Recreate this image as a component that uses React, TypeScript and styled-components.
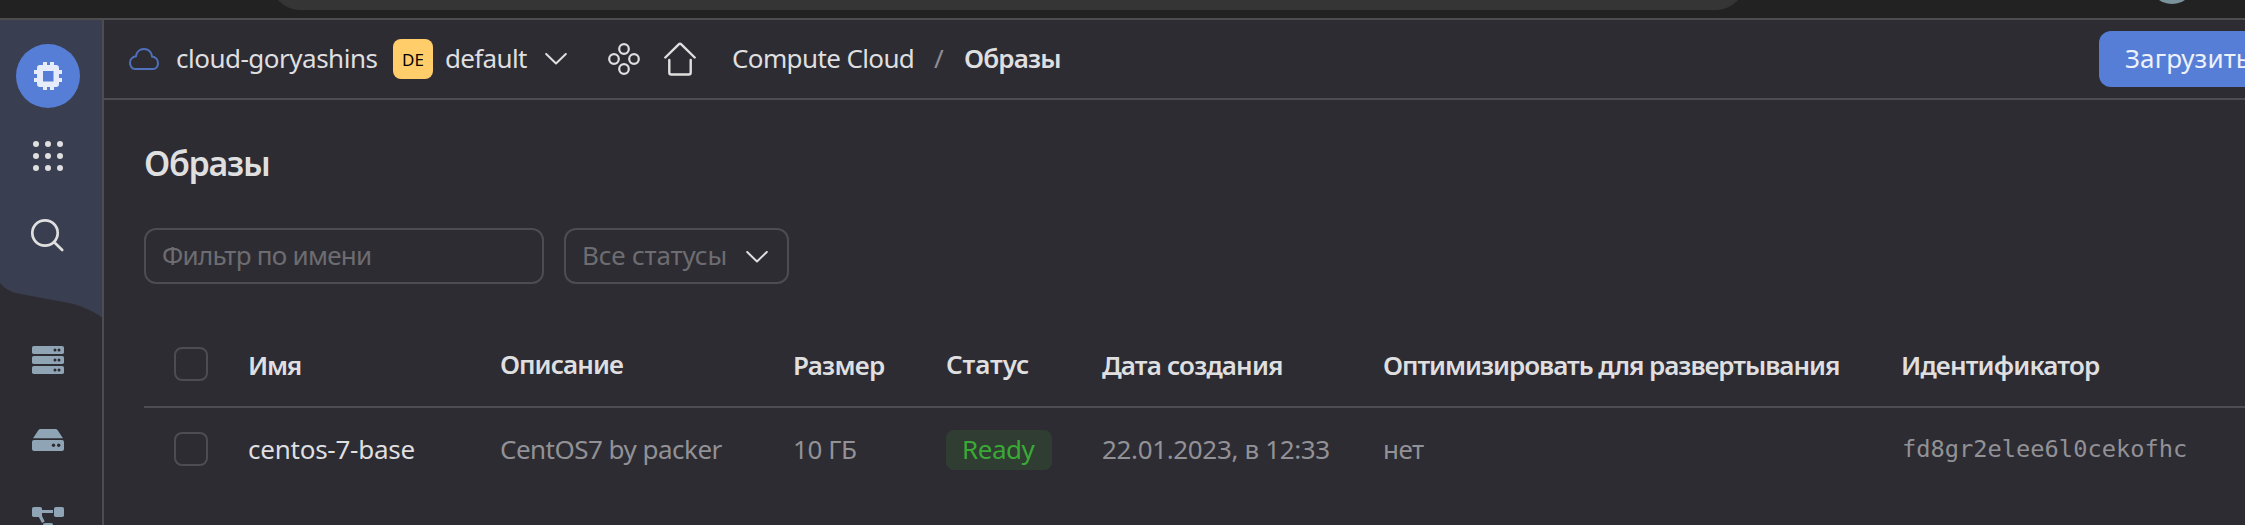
import React from "react";
import styled, { createGlobalStyle } from "styled-components";

const GlobalStyle = createGlobalStyle`
  * { box-sizing: border-box; }
  html, body { margin: 0; background: #2d2c33; overflow: hidden; }
  body { font: 26px/36px "Noto Sans", sans-serif; color: #dfdfe0; }
  svg { display: block; flex: none; }
`;

const Page = styled.div`
  display: flex;
  flex-direction: column;
  width: 2245px;
  height: 525px;
  overflow: hidden;
`;

const BrowserBar = styled.div`
  display: flex;
  justify-content: space-between;
  align-items: flex-end;
  flex: none;
  height: 20px;
  padding: 0 50px 8px 271px;
  background: #222222;
  border-bottom: 2px solid #4d4d4f;
`;

const AddressField = styled.div`
  display: flex;
  align-items: flex-end;
  width: 1474px;
  height: 10px;
  overflow: hidden;

  &::before {
    content: "";
    flex: 1;
    height: 58px;
    border-radius: 29px;
    background: #353535;
  }
`;

const Avatar = styled.div`
  display: flex;
  align-items: flex-end;
  width: 46px;
  height: 4px;
  margin-bottom: 6px;
  overflow: hidden;

  &::before {
    content: "";
    flex: none;
    width: 46px;
    height: 46px;
    border-radius: 50%;
    background: #7b939c;
  }
`;

const Workspace = styled.div`
  display: flex;
  flex: 1;
  min-height: 0;
`;

const Sidebar = styled.nav`
  display: flex;
  flex-direction: column;
  flex: none;
  width: 104px;
  overflow: hidden;
  border-right: 2px solid #4d4c52;
`;

const SidebarTop = styled.div`
  display: flex;
  flex-direction: column;
  align-items: center;
  flex: none;
  height: 300px;
  padding: 24px 6px 0 0;
  background: #3a3e51;
  clip-path: path("M0 0H102V297.5C92 290 80 285.500 69 283L18 273.500C10 272 4 268 0 263Z");
`;

const ServiceButton = styled.div`
  display: grid;
  place-items: center;
  width: 64px;
  height: 64px;
  border-radius: 50%;
  background: #567ed6;
`;

const SidebarItem = styled.div<{ $h?: number }>`
  display: grid;
  place-items: center;
  flex: none;
  width: 80px;
  height: ${({ $h = 80 }) => $h}px;
`;

const SidebarList = styled.div`
  display: flex;
  flex-direction: column;
  align-items: center;
  padding-right: 6px;
`;

const Main = styled.main`
  display: flex;
  flex-direction: column;
  flex: 1;
  min-width: 0;
`;

const Header = styled.header`
  display: flex;
  align-items: center;
  flex: none;
  height: 80px;
  padding-left: 25px;
  overflow: hidden;
  white-space: nowrap;
  border-bottom: 2px solid #4d4c52;
`;

const HeaderText = styled.span<{ $w: number; $ls: number; $bold?: boolean; $dim?: boolean }>`
  flex: none;
  width: ${({ $w }) => $w}px;
  margin-top: -2px;
  letter-spacing: ${({ $ls }) => $ls}px;
  font-weight: ${({ $bold }) => ($bold ? 600 : 400)};
  color: ${({ $dim }) => ($dim ? "#8f8e93" : "inherit")};
`;

const CloudSlot = styled.div`
  width: 47px;
`;

const FolderBadge = styled.span`
  flex: none;
  width: 40px;
  height: 40px;
  margin-right: 12px;
  border-radius: 8px;
  background: #ffce6b;
  color: #000;
  font-size: 17px;
  line-height: 42px;
  text-align: center;
`;

const HeaderIcon = styled.div<{ $w: number }>`
  flex: none;
  width: ${({ $w }) => $w}px;
`;

const UploadButton = styled.button`
  flex: none;
  width: 146px;
  height: 56px;
  margin-left: auto;
  padding: 0 0 2px 26px;
  overflow: hidden;
  border: 0;
  border-radius: 12px 0 0 12px;
  background: #567ed6;
  color: #edf1fb;
  font: inherit;
  letter-spacing: 0.1px;
  text-align: left;
  white-space: nowrap;
`;

const Content = styled.section`
  padding: 40px 0 0 40px;
`;

const Title = styled.h1`
  margin: 0;
  font-size: 34px;
  line-height: 47px;
  padding-bottom: 1px;
  font-weight: 600;
  letter-spacing: -1.25px;
`;

const Filters = styled.div`
  display: flex;
  gap: 20px;
  margin-top: 40px;
`;

const Field = styled.div<{ $w: number; $ls: number }>`
  display: flex;
  align-items: center;
  justify-content: space-between;
  width: ${({ $w }) => $w}px;
  height: 56px;
  padding: 0 19px 2px 16px;
  border: 2px solid #4d4c52;
  border-radius: 12px;
  color: #6d6c71;
  letter-spacing: ${({ $ls }) => $ls}px;
  white-space: nowrap;

  svg { margin-top: 4px; }
`;

const Table = styled.div`
  margin-top: 40px;
`;

const Row = styled.div<{ $head?: boolean }>`
  display: grid;
  grid-template-columns: 104px 252px 293px 153px 156px 281px 518px 1fr;
  align-items: center;
  height: ${({ $head }) => ($head ? 84 : 82)}px;
  font-weight: ${({ $head }) => ($head ? 600 : 400)};
  color: ${({ $head }) => ($head ? "#dfdfe0" : "#929196")};
  border-bottom: ${({ $head }) => ($head ? "2px solid #4d4c52" : "0")};
  white-space: nowrap;
`;

const Cell = styled.div<{ $ls?: number; $lift?: number; $strong?: boolean }>`
  letter-spacing: ${({ $ls = 0 }) => $ls}px;
  padding-bottom: ${({ $lift = 0 }) => $lift}px;
  ${({ $strong }) => $strong && "color: #dfdfe0;"}
`;

const CheckBox = styled.div`
  width: 34px;
  height: 34px;
  margin-left: 30px;
  border: 2px solid #4d4c52;
  border-radius: 8px;
`;

const Status = styled.span`
  display: block;
  width: 106px;
  height: 40px;
  margin-top: 2px;
  padding-left: 16px;
  border-radius: 8px;
  background: #2f3d33;
  color: #3aa935;
  line-height: 38px;
  letter-spacing: -0.48px;
`;

const Identifier = styled.span`
  display: block;
  padding-left: 1px;
  font-family: "DejaVu Sans Mono", monospace;
  font-size: 23.7px;
`;

const ChipIcon = () => (
  <svg width="28" height="28" viewBox="0 0 28 28" fill="#e6ecfa">
    <path d="M9 0h4v3h3V0h4v3h2q3 0 3 3v2h3v4h-3v4h3v4h-3v2q0 3-3 3h-2v3h-4v-3h-3v3H9v-3H6q-3 0-3-3v-2H0v-4h3v-4H0V8h3V6q0-3 3-3h3zM9 9v10.500h10.500V9z" fillRule="evenodd" />
  </svg>
);

const AppsIcon = () => (
  <svg width="30" height="30" viewBox="0 0 30 30" fill="#dfdfe0">
    {[3, 15, 27].map((y) => [3, 15, 27].map((x) => <circle key={`${x}-${y}`} cx={x} cy={y} r="3" />))}
  </svg>
);

const SearchIcon = () => (
  <svg width="34" height="34" viewBox="0 0 34 34" fill="none" stroke="#dfdfe0" strokeWidth="2.700" strokeLinecap="round">
    <circle cx="14" cy="15" r="12.700" />
    <path d="M23.500 24.500L31.200 32" />
  </svg>
);

const ServersIcon = () => (
  <svg width="32" height="28" viewBox="0 0 32 28" fill="#8fa4b5">
    {[0, 10, 20].map((y) => (
      <g key={y}>
        <rect y={y} width="32" height="8" rx="1.800" />
        <circle cx="23" cy={y + 4} r="1.500" fill="#2d2c33" />
        <circle cx="27" cy={y + 4} r="1.500" fill="#2d2c33" />
      </g>
    ))}
  </svg>
);

const DiskIcon = () => (
  <svg width="32" height="22" viewBox="0 0 32 22" fill="#8fa4b5">
    <path d="M8.500 0h15q1.300 0 2 1L31 9.200H1L6.500 1q.7-1 2-1z" />
    <rect y="11" width="32" height="11" rx="2" />
    <circle cx="21.500" cy="16.300" r="1.700" fill="#2d2c33" />
    <circle cx="26.700" cy="16.300" r="1.700" fill="#2d2c33" />
  </svg>
);

const NetworkIcon = () => (
  <svg width="32" height="26" viewBox="0 0 32 26" fill="#8fa4b5">
    <rect width="10" height="10" rx="1.800" />
    <rect x="22" width="10" height="10" rx="1.800" />
    <rect x="11" y="16" width="10" height="10" rx="1.800" />
    <path d="M9 3h12v3H9zM6.500 9.500l3-1.500 3.200 6.500-2.700 1.500z" />
  </svg>
);

const CloudIcon = () => (
  <svg width="30" height="22" viewBox="0 0 30 22" fill="none" stroke="#4f71bb" strokeWidth="2">
    <path d="M6 21C3 21 1 18 1 14.800C1 11.400 3.500 8.700 7 8.200C7.500 4 10.700 1 15 1C19.300 1 22.500 4 23 8.500C26.600 9 29 11.800 29 15.200C29 18.500 27 21 24 21Z" />
  </svg>
);

const ChevronIcon = () => (
  <svg width="22" height="12" viewBox="0 0 22 12" fill="none" stroke="#dfdfe0" strokeWidth="2" strokeLinecap="round" strokeLinejoin="round">
    <path d="M1.200 1L11 10.500L20.800 1" />
  </svg>
);

const ServicesIcon = () => (
  <svg width="32" height="32" viewBox="0 0 32 32" fill="none" stroke="#dfdfe0" strokeWidth="2.200">
    <circle cx="16" cy="6" r="4.800" />
    <circle cx="6" cy="16" r="4.800" />
    <circle cx="26" cy="16" r="4.800" />
    <circle cx="16" cy="26" r="4.800" />
  </svg>
);

const HomeIcon = () => (
  <svg width="32" height="34" viewBox="0 0 32 34" fill="none" stroke="#dfdfe0" strokeWidth="2.400" strokeLinecap="round" strokeLinejoin="round">
    <path d="M1.300 15.500L14.700 2.400Q16 1.200 17.300 2.400L30.700 15.500M5.300 18V30.500Q5.300 32.500 7.300 32.500H24.700Q26.700 32.500 26.700 30.500V18" />
  </svg>
);

export default function App() {
  return (
    <Page>
      <GlobalStyle />
      <BrowserBar>
        <AddressField />
        <Avatar />
      </BrowserBar>
      <Workspace>
        <Sidebar>
          <SidebarTop>
            <ServiceButton><ChipIcon /></ServiceButton>
            <SidebarItem $h={96}><AppsIcon /></SidebarItem>
            <SidebarItem $h={62}><SearchIcon /></SidebarItem>
          </SidebarTop>
          <SidebarList>
            <SidebarItem><ServersIcon /></SidebarItem>
            <SidebarItem><DiskIcon /></SidebarItem>
            <SidebarItem><NetworkIcon /></SidebarItem>
          </SidebarList>
        </Sidebar>
        <Main>
          <Header>
            <CloudSlot><CloudIcon /></CloudSlot>
            <HeaderText $w={217} $ls={-0.5}>cloud-goryashins</HeaderText>
            <FolderBadge>DE</FolderBadge>
            <HeaderText $w={100} $ls={-0.66}>default</HeaderText>
            <HeaderIcon $w={63}><ChevronIcon /></HeaderIcon>
            <HeaderIcon $w={56}><ServicesIcon /></HeaderIcon>
            <HeaderIcon $w={68}><HomeIcon /></HeaderIcon>
            <HeaderText $w={202} $ls={-0.62}>Compute Cloud</HeaderText>
            <HeaderText $w={30} $ls={0} $dim>/</HeaderText>
            <HeaderText $w={110} $ls={-0.85} $bold>Образы</HeaderText>
            <UploadButton>Загрузить</UploadButton>
          </Header>
          <Content>
            <Title>Образы</Title>
            <Filters>
              <Field $w={400} $ls={-0.73}>Фильтр по имени</Field>
              <Field $w={225} $ls={-0.15}>Все статусы<ChevronIcon /></Field>
            </Filters>
            <Table>
              <Row $head>
                <Cell $lift={2}><CheckBox /></Cell>
                <Cell $ls={-1.3}>Имя</Cell>
                <Cell $ls={-0.94} $lift={2}>Описание</Cell>
                <Cell $ls={-0.71}>Размер</Cell>
                <Cell $ls={-0.1} $lift={2}>Статус</Cell>
                <Cell $ls={-0.85}>Дата создания</Cell>
                <Cell $ls={-1.05}>Оптимизировать для развертывания</Cell>
                <Cell $ls={-0.83}>Идентификатор</Cell>
              </Row>
              <Row>
                <CheckBox />
                <Cell $ls={-0.24} $strong>centos-7-base</Cell>
                <Cell $ls={-0.52}>CentOS7 by packer</Cell>
                <Cell $ls={-0.43}>10 ГБ</Cell>
                <Cell><Status>Ready</Status></Cell>
                <Cell $ls={-0.35}>22.01.2023, в 12:33</Cell>
                <Cell $ls={-0.52}>нет</Cell>
                <Cell><Identifier>fd8gr2elee6l0cekofhc</Identifier></Cell>
              </Row>
            </Table>
          </Content>
        </Main>
      </Workspace>
    </Page>
  );
}
